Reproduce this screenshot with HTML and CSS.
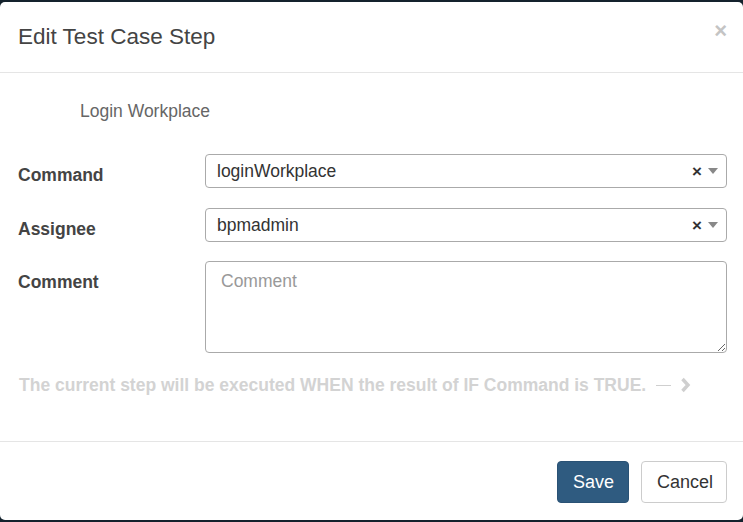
FILE: index.html
```html
<!DOCTYPE html>
<html>
<head>
<meta charset="utf-8">
<link rel="stylesheet" href="styles.css">
</head>
<body>
<div class="modal">
  <div class="modal-header">
    <h4 class="modal-title">Edit Test Case Step</h4>
    <button class="close" type="button">×</button>
  </div>
  <div class="modal-body">
    <div class="step-name">Login Workplace</div>
    <div class="form-row">
      <label class="label">Command</label>
      <div class="select">
        <span class="select-value">loginWorkplace</span>
        <span class="select-clear">×</span>
        <span class="select-arrow"></span>
      </div>
    </div>
    <div class="form-row">
      <label class="label">Assignee</label>
      <div class="select">
        <span class="select-value">bpmadmin</span>
        <span class="select-clear">×</span>
        <span class="select-arrow"></span>
      </div>
    </div>
    <div class="form-row form-row-last">
      <label class="label">Comment</label>
      <textarea class="textarea" placeholder="Comment"></textarea>
    </div>
    <div class="condition">
      <span>The current step will be executed WHEN the result of IF Command is TRUE.</span>
      <span class="dash"></span>
      <svg class="chev" width="11" height="16" viewBox="0 0 11 16"><path d="M2.5 2 L8 8 L2.5 14" fill="none" stroke="#cfcfcf" stroke-width="3.4"/></svg>
    </div>
  </div>
  <div class="modal-footer">
    <button class="btn btn-primary" type="button">Save</button>
    <button class="btn btn-default" type="button">Cancel</button>
  </div>
</div>
</body>
</html>
```
FILE: styles.css
```css
html, body {
  margin: 0;
  padding: 0;
}
body {
  background: #14222d;
  font-family: "Liberation Sans", Arial, sans-serif;
  color: #333;
  height: 522px;
  overflow: hidden;
}
.modal {
  margin-top: 2px;
  background: #fff;
  border-radius: 5px;
  height: 518px;
  display: flex;
  flex-direction: column;
}
.modal-header {
  height: 70px;
  border-bottom: 1px solid #e5e5e5;
  display: flex;
  align-items: center;
  justify-content: space-between;
  padding: 0 16px 0 18px;
}
.modal-title {
  margin: 0;
  font-size: 22.5px;
  font-weight: normal;
  color: #444;
  padding-bottom: 1px;
}
.close {
  border: none;
  background: none;
  font-family: "Liberation Sans", Arial, sans-serif;
  font-size: 22px;
  font-weight: bold;
  color: #c4c4c4;
  padding: 0;
  margin-top: -12px;
  line-height: 1;
}
.modal-body {
  padding: 26px 16px 0 18px;
  height: 369px;
  border-bottom: 1px solid #e5e5e5;
  box-sizing: border-box;
}
.step-name {
  font-size: 17.5px;
  color: #666;
  padding-left: 62px;
  line-height: 24px;
  margin-bottom: 31px;
}
.form-row {
  display: grid;
  grid-template-columns: 187px 1fr;
  align-items: start;
  margin-bottom: 20px;
}
.form-row-last {
  margin-top: -1px;
  margin-bottom: 0;
}
.label {
  font-size: 17.5px;
  line-height: 20px;
  padding-top: 11px;
  font-weight: bold;
  color: #444;
}
.select {
  height: 34px;
  box-sizing: border-box;
  border: 1px solid #aaa;
  border-radius: 4px;
  display: flex;
  align-items: center;
  padding: 0 8px 0 11px;
}
.select-value {
  flex: 1;
  font-size: 17.5px;
  color: #333;
}
.select-clear {
  font-size: 17px;
  font-weight: bold;
  color: #333;
  margin-right: 6px;
  line-height: 1;
}
.select-arrow {
  width: 0;
  height: 0;
  border-left: 5px solid transparent;
  border-right: 5px solid transparent;
  border-top: 6px solid #888;
}
.textarea {
  display: block;
  height: 92px;
  box-sizing: border-box;
  border: 1px solid #aaa;
  border-radius: 4px;
  padding: 9px 15px;
  font-family: "Liberation Sans", Arial, sans-serif;
  font-size: 17.5px;
  resize: vertical;
  width: 100%;
  margin: 0;
}
.textarea::placeholder {
  color: #999;
}
.condition {
  margin-top: 22px;
  display: flex;
  align-items: center;
  font-size: 17.5px;
  line-height: 20px;
  font-weight: bold;
  color: #d3d3d3;
  padding-left: 1px;
}
.dash {
  width: 15px;
  height: 1px;
  background: #cfcfcf;
  margin-left: 10px;
  margin-right: 9px;
}
.modal-footer {
  display: flex;
  justify-content: flex-end;
  gap: 12px;
  padding: 19px 16px 0 0;
}
.btn {
  height: 42px;
  border-radius: 4px;
  font-family: "Liberation Sans", Arial, sans-serif;
  font-size: 18px;
  padding: 0 15px;
  cursor: pointer;
}
.btn-primary {
  background: #2f5b80;
  border: 1px solid #2a5275;
  color: #fff;
  width: 72px;
}
.btn-default {
  background: #fff;
  border: 1px solid #ccc;
  color: #333;
  width: 86px;
}
```
